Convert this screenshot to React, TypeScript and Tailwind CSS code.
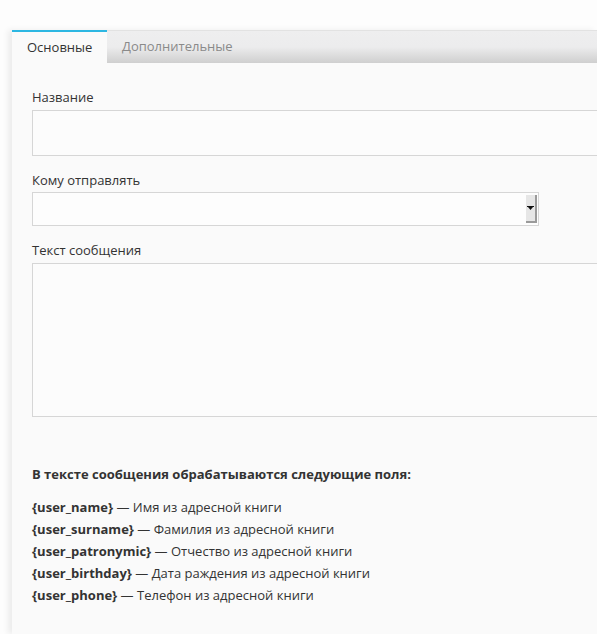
import React from 'react';

const fields = [
  { key: '{user_name}', text: 'Имя из адресной книги' },
  { key: '{user_surname}', text: 'Фамилия из адресной книги' },
  { key: '{user_patronymic}', text: 'Отчество из адресной книги' },
  { key: '{user_birthday}', text: 'Дата раждения из адресной книги' },
  { key: '{user_phone}', text: 'Телефон из адресной книги' },
];

export default function App() {
  return (
    <div
      className="min-h-[634px] h-[634px] overflow-hidden bg-[#fdfdfd] pt-[30px] pl-[12px] text-[13px] text-[#333]"
      style={{ fontFamily: '"Open Sans", "Noto Sans", sans-serif' }}
    >
      <div className="flex h-[604px] flex-col bg-[#fafafa] shadow-[-4px_0_6px_rgba(0,0,0,0.07)]">
        {/* Tabs */}
        <div className="flex h-[33px] border-t border-[#e2e2e2] bg-gradient-to-b from-[#eeeeef] via-[#ececed] to-[#cfcfcf]">
          <div className="-mt-px flex w-[95px] items-center border-t-2 border-[#2db7e2] bg-[#fafafa] pl-[15px] text-[#333]">
            Основные
          </div>
          <div className="flex items-center pl-[15px] text-[#8a8a8a]">Дополнительные</div>
        </div>

        {/* Body */}
        <div className="flex-1 overflow-hidden pl-[20px] pt-[25px]">
          <label className="block leading-[18px]">Название</label>
          <div className="mt-[4px] h-[46px] w-[600px] border border-[#d6d6d6] bg-[#fcfcfc]" />

          <label className="mt-[15px] block leading-[18px]">Кому отправлять</label>
          <div className="mt-[3px] flex h-[34px] w-[507px] border border-[#d6d6d6] bg-[#fdfdfd]">
            <div className="flex-1" />
            <div className="my-[2px] mr-px flex w-[11px] items-center justify-center border-b-2 border-r-2 border-[#9a9a9a] bg-[#e6e6e6]">
              <svg width="7" height="6" viewBox="0 0 7 6">
                <path d="M0 1h7v1H0z" fill="#111" />
                <path d="M1 2h5L3.5 5z" fill="#111" />
              </svg>
            </div>
          </div>

          <label className="mt-[15px] block leading-[18px]">Текст сообщения</label>
          <div className="mt-[4px] h-[154px] w-[600px] border border-[#d6d6d6] bg-[#fcfcfc]" />

          <p className="mt-[48px] font-bold leading-[18px]">В тексте сообщения обрабатываются следующие поля:</p>
          <ul className="mt-[13px]">
            {fields.map((f) => (
              <li key={f.key} className="leading-[22px]">
                <b className="font-bold">{f.key}</b> — {f.text}
              </li>
            ))}
          </ul>
        </div>
      </div>
    </div>
  );
}
